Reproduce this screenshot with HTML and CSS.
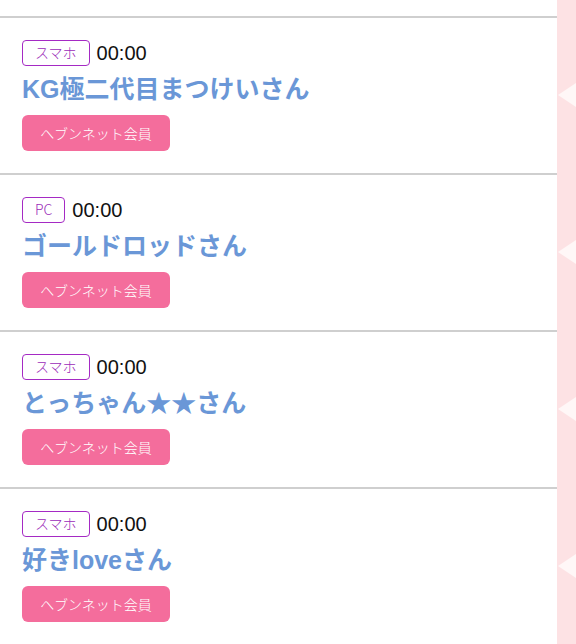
FILE: index.html
```html
<!DOCTYPE html>
<html lang="ja">
<head>
<meta charset="utf-8">
<link rel="stylesheet" href="styles.css">
</head>
<body>
<div class="page">
  <div class="row top">
    <div class="cell"></div>
    <div class="side"></div>
  </div>
  <div class="row">
    <div class="cell item">
      <div class="meta"><span class="badge">スマホ</span><span class="time">00:00</span></div>
      <div class="name">KG極二代目まつけいさん</div>
      <span class="member">ヘブンネット会員</span>
    </div>
    <div class="side"><span class="tri"></span></div>
  </div>
  <div class="row">
    <div class="cell item">
      <div class="meta"><span class="badge">PC</span><span class="time">00:00</span></div>
      <div class="name">ゴールドロッドさん</div>
      <span class="member">ヘブンネット会員</span>
    </div>
    <div class="side"><span class="tri"></span></div>
  </div>
  <div class="row">
    <div class="cell item">
      <div class="meta"><span class="badge">スマホ</span><span class="time">00:00</span></div>
      <div class="name">とっちゃん★★さん</div>
      <span class="member">ヘブンネット会員</span>
    </div>
    <div class="side"><span class="tri"></span></div>
  </div>
  <div class="row">
    <div class="cell item">
      <div class="meta"><span class="badge">スマホ</span><span class="time">00:00</span></div>
      <div class="name">好きloveさん</div>
      <span class="member">ヘブンネット会員</span>
    </div>
    <div class="side"><span class="tri"></span></div>
  </div>
</div>
</body>
</html>
```

FILE: styles.css
```css
html, body {
  margin: 0;
  padding: 0;
  background: #fde2e4;
}
body {
  font-family: "Liberation Sans", "Noto Sans CJK JP", sans-serif;
}
.page {
  display: flex;
  flex-direction: column;
  width: 576px;
}
.row {
  display: flex;
}
.cell {
  width: 557px;
  background: #fff;
  box-sizing: border-box;
}
.top .cell {
  height: 16px;
}
.side {
  flex: 1;
  background: #fde2e4;
  display: flex;
  align-items: center;
  justify-content: flex-end;
}
.tri {
  width: 0;
  height: 0;
  border-top: 12px solid transparent;
  border-bottom: 12px solid transparent;
  border-right: 18px solid #fff7f7;
}
.item {
  height: 157px;
  border-top: 2px solid #cfcfcf;
  padding: 22px 0 0 22px;
  display: flex;
  flex-direction: column;
  align-items: flex-start;
}
.meta {
  display: flex;
  align-items: center;
  gap: 7px;
  height: 26px;
}
.badge {
  box-sizing: border-box;
  height: 26px;
  padding: 0 12px;
  border: 1.5px solid #a52ac4;
  border-radius: 4px;
  color: #9b2bb8;
  font-family: "Noto Sans CJK JP", sans-serif;
  font-weight: 300;
  font-size: 14px;
  line-height: 23px;
}
.time {
  font-size: 20px;
  color: #111;
  line-height: 26px;
}
.name {
  margin-top: 5px;
  font-family: "Liberation Sans", "Noto Sans CJK JP", sans-serif;
  font-weight: bold;
  font-size: 25px;
  line-height: 36px;
  color: #6a97d7;
}
.member {
  margin-top: 8px;
  box-sizing: border-box;
  width: 148px;
  height: 36px;
  background: #f46d9c;
  border-radius: 6px;
  color: #fff;
  font-family: "Noto Sans CJK JP", sans-serif;
  font-weight: 300;
  font-size: 14px;
  line-height: 36px;
  text-align: center;
}
```
